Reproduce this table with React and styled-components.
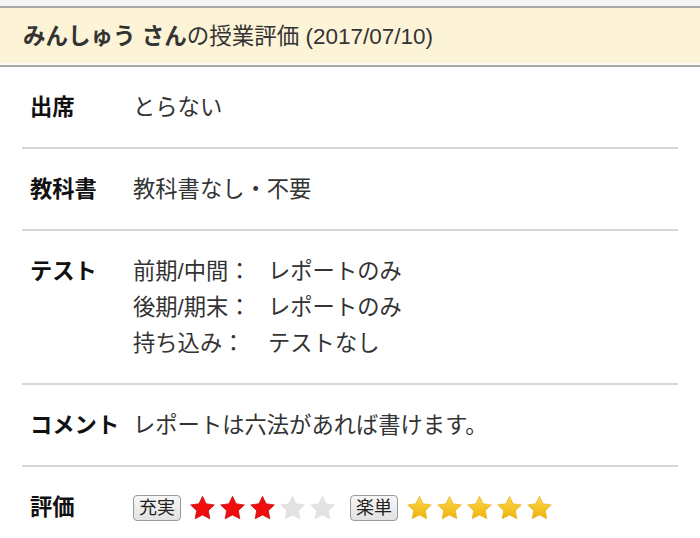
import React from "react";
import styled, { createGlobalStyle } from "styled-components";

const Global = createGlobalStyle`
  html, body { margin: 0; padding: 0; background: #fff; }
  body {
    font-family: "Liberation Sans", "Noto Sans CJK JP", sans-serif;
    color: #333;
  }
`;

const Page = styled.div`
  width: 700px;
  padding-top: 6px;
  background: linear-gradient(#f4f4f4 6px, #ffffff 6px);
`;

const Header = styled.header`
  height: 57px;
  display: flex;
  align-items: center;
  padding: 0 23px;
  background: #fdf4d8;
  border-top: 2px solid #a8a8a8;
  border-bottom: 2px solid #a8a8a8;
  box-shadow: inset 0 -2px 0 #fffbee;
  font-size: 22.5px;
  line-height: 30px;
  color: #333;
  white-space: nowrap;
`;

const Name = styled.strong`
  font-weight: bold;
  color: #333;
`;

const List = styled.div`
  display: flex;
  flex-direction: column;
  padding: 0 22px;
`;

const Row = styled.div`
  display: grid;
  grid-template-columns: 103px 1fr;
  padding: 23px 0 21px 8px;
  border-bottom: ${(p) => (p.$last ? "none" : "2px solid #d6d6d6")};
  font-size: 22.3px;
  line-height: 36px;
`;

const Label = styled.div`
  font-weight: bold;
  color: #111;
  white-space: nowrap;
`;

const Value = styled.div`
  color: #333;
  white-space: nowrap;
`;

const SubTable = styled.div`
  display: grid;
  grid-template-columns: 135px auto;
  color: #333;
  white-space: nowrap;
`;

const RatingLine = styled.div`
  display: flex;
  align-items: center;
  height: 36px;
`;

const Badge = styled.span`
  display: inline-flex;
  align-items: center;
  height: 24px;
  padding: 0 5px;
  margin-right: 8px;
  font-size: 18px;
  line-height: 24px;
  color: #222;
  background: linear-gradient(#f6f6f6, #e2e2e2);
  border: 1px solid #9a9a9a;
  border-radius: 4px;
`;

const Stars = styled.span`
  display: inline-flex;
  align-items: center;
  gap: 3px;
  margin-right: 14px;
`;

const StarSvg = styled.svg`
  width: 27px;
  height: 27px;
  display: block;
`;

const STAR =
  "M12 1.2l3.2 6.6 7.3 1-5.3 5.1 1.3 7.2L12 17.7l-6.5 3.4 1.3-7.2L1.5 8.8l7.3-1z";

const Star = ({ kind, id }) => {
  if (kind === "yellow") {
    return (
      <StarSvg viewBox="0 0 24 24">
        <defs>
          <linearGradient id={id} x1="0" y1="0" x2="0" y2="1">
            <stop offset="0" stopColor="#fbd84a" />
            <stop offset="1" stopColor="#f0b20a" />
          </linearGradient>
        </defs>
        <path d={STAR} fill={`url(#${id})`} stroke="#e6b020" strokeWidth="0.6" strokeLinejoin="round" />
      </StarSvg>
    );
  }
  if (kind === "red") {
    return (
      <StarSvg viewBox="0 0 24 24">
        <path d={STAR} fill="#f00d0d" stroke="#c81010" strokeWidth="0.7" strokeLinejoin="round" />
      </StarSvg>
    );
  }
  return (
    <StarSvg viewBox="0 0 24 24">
      <path d={STAR} fill="#e3e3e3" stroke="#dadada" strokeWidth="0.5" strokeLinejoin="round" />
    </StarSvg>
  );
};

const Rating = ({ label, value, kind, prefix }) => (
  <>
    <Badge>{label}</Badge>
    <Stars>
      {[0, 1, 2, 3, 4].map((i) => (
        <Star key={i} id={`${prefix}${i}`} kind={i < value ? kind : "empty"} />
      ))}
    </Stars>
  </>
);

const tests = [
  ["前期/中間：", "レポートのみ"],
  ["後期/期末：", "レポートのみ"],
  ["持ち込み：", "テストなし"],
];

export default function App() {
  return (
    <Page>
      <Global />
      <Header>
        <Name>みんしゅう さん</Name>
        <span>の授業評価&nbsp;(2017/07/10)</span>
      </Header>
      <List>
        <Row>
          <Label>出席</Label>
          <Value>とらない</Value>
        </Row>
        <Row>
          <Label>教科書</Label>
          <Value>教科書なし・不要</Value>
        </Row>
        <Row>
          <Label>テスト</Label>
          <SubTable>
            {tests.map(([k, v]) => (
              <React.Fragment key={k}>
                <span>{k}</span>
                <span>{v}</span>
              </React.Fragment>
            ))}
          </SubTable>
        </Row>
        <Row>
          <Label>コメント</Label>
          <Value>レポートは六法があれば書けます。</Value>
        </Row>
        <Row $last>
          <Label>評価</Label>
          <RatingLine>
            <Rating label="充実" value={3} kind="red" prefix="r" />
            <Rating label="楽単" value={5} kind="yellow" prefix="y" />
          </RatingLine>
        </Row>
      </List>
    </Page>
  );
}
